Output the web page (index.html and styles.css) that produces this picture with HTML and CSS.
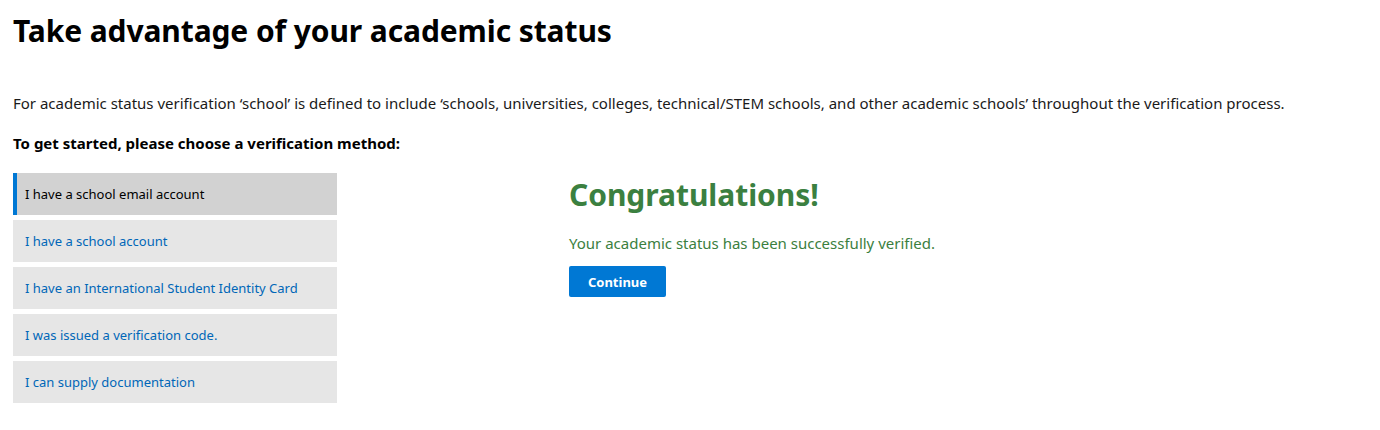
FILE: index.html
```html
<!DOCTYPE html>
<html lang="en">
<head>
<meta charset="utf-8">
<title>Academic status</title>
<link rel="stylesheet" href="styles.css">
</head>
<body>
<main class="page">
  <h1 class="title">Take advantage of your academic status</h1>
  <p class="intro">For academic status verification ‘school’ is defined to include ‘schools, universities, colleges, technical/STEM schools, and other academic schools’ throughout the verification process.</p>
  <p class="prompt">To get started, please choose a verification method:</p>
  <div class="layout">
    <nav class="methods">
      <a class="method method-active" href="#">I have a school email account</a>
      <a class="method" href="#">I have a school account</a>
      <a class="method" href="#">I have an International Student Identity Card</a>
      <a class="method" href="#">I was issued a verification code.</a>
      <a class="method" href="#">I can supply documentation</a>
    </nav>
    <section class="result">
      <h2 class="result-title">Congratulations!</h2>
      <p class="result-text">Your academic status has been successfully verified.</p>
      <button class="btn-primary" type="button">Continue</button>
    </section>
  </div>
</main>
</body>
</html>
```
FILE: styles.css
```css
html, body {
  margin: 0;
  padding: 0;
  background: #ffffff;
}
body {
  font-family: "Noto Sans", "Open Sans", "DejaVu Sans", sans-serif;
  color: #000000;
}
.page {
  padding: 0 13px;
}
.title {
  margin: 0;
  padding-top: 12px;
  font-size: 30px;
  line-height: 38px;
  font-weight: 700;
  letter-spacing: -0.1px;
}
.intro {
  margin: 43px 0 0;
  font-size: 15px;
  line-height: 20px;
  color: #1a1a1a;
}
.prompt {
  margin: 20px 0 0;
  font-size: 15px;
  line-height: 20px;
  font-weight: 700;
}
.layout {
  display: flex;
  align-items: flex-start;
  gap: 232px;
  margin-top: 20px;
}
.methods {
  display: flex;
  flex-direction: column;
  gap: 5px;
  width: 324px;
}
.method {
  display: flex;
  align-items: center;
  height: 42px;
  padding: 0 12px;
  background: #e6e6e6;
  color: #0067b8;
  font-size: 13px;
  text-decoration: none;
}
.method-active {
  background: #d2d2d2;
  color: #000000;
  border-left: 4px solid #0078d4;
  padding-left: 8px;
}
.result {
  padding-top: 2px;
}
.result-title {
  margin: 0;
  font-size: 30px;
  line-height: 40px;
  font-weight: 700;
  color: #3b8040;
  letter-spacing: -0.05px;
}
.result-text {
  margin: 18px 0 0;
  font-size: 15px;
  line-height: 20px;
  color: #3b8040;
}
.btn-primary {
  margin-top: 13px;
  width: 97px;
  height: 31px;
  border: 0;
  border-radius: 2px;
  background: #0078d4;
  color: #ffffff;
  font-family: inherit;
  font-size: 13px;
  font-weight: 700;
  cursor: pointer;
}
```
